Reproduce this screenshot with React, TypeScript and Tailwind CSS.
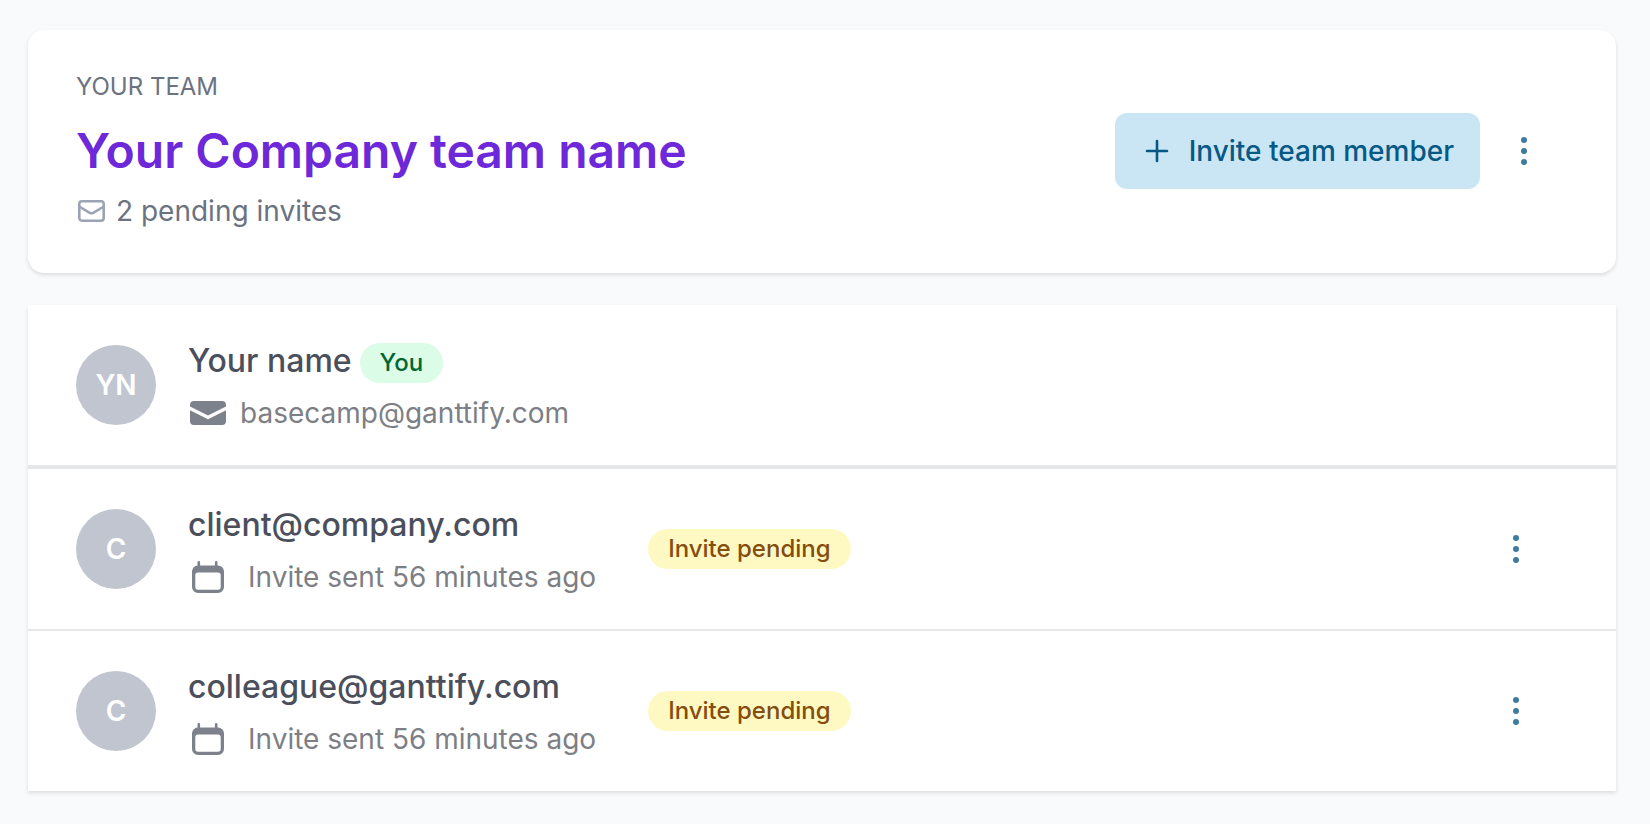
type Member = {
  id: number;
  initials: string;
  name: string;
  detail: string;
  isYou?: boolean;
  pending?: boolean;
};

const members: Member[] = [
  {
    id: 1,
    initials: "YN",
    name: "Your name",
    detail: "basecamp@ganttify.com",
    isYou: true,
  },
  {
    id: 2,
    initials: "C",
    name: "client@company.com",
    detail: "Invite sent 56 minutes ago",
    pending: true,
  },
  {
    id: 3,
    initials: "C",
    name: "colleague@ganttify.com",
    detail: "Invite sent 56 minutes ago",
    pending: true,
  },
];

function MailOutline() {
  return (
    <svg
      className="w-8 h-8 text-[#9ca3b5]"
      viewBox="0 0 32 32"
      fill="none"
      stroke="currentColor"
      strokeWidth="2.6"
      strokeLinecap="round"
      strokeLinejoin="round"
      aria-hidden="true"
    >
      <rect x="3.3" y="6.3" width="24.4" height="19.4" rx="2.6" />
      <path d="M4 12 L13.8 17.800 Q15.500 18.700 17.200 17.800 L27 12" />
    </svg>
  );
}

function MailSolid() {
  return (
    <svg
      className="w-10 h-10 text-[#7d818c]"
      viewBox="0 0 40 40"
      fill="currentColor"
      aria-hidden="true"
    >
      <path d="M2 13.600 V12 A4 4 0 0 1 6 8 H34 A4 4 0 0 1 38 12 V13.600 L20 22.600 Z" />
      <path d="M2 17.200 L20 26.200 L38 17.200 V28 A4 4 0 0 1 34 32 H6 A4 4 0 0 1 2 28 Z" />
    </svg>
  );
}

function Calendar() {
  return (
    <svg
      className="w-10 h-10 text-[#7d818c]"
      viewBox="0 0 40 40"
      fill="currentColor"
      aria-hidden="true"
    >
      <path
        fillRule="evenodd"
        d="M9.500 5.300 a1.300 1.300 0 0 1 2.600 0 V8.500 H26.900 V5.300 a1.300 1.300 0 0 1 2.600 0 V8.500 H30 A6 6 0 0 1 36 14.500 V30 A6 6 0 0 1 30 36 H10 A6 6 0 0 1 4 30 V14.500 A6 6 0 0 1 9.500 8.500 Z M10 15.500 A2.700 2.700 0 0 0 7.300 18.200 V30 A2.700 2.700 0 0 0 10 32.700 H30 A2.700 2.700 0 0 0 32.700 30 V18.200 A2.700 2.700 0 0 0 30 15.500 Z"
      />
    </svg>
  );
}

function MenuButton({ label }: { label: string }) {
  return (
    <button
      type="button"
      aria-label={label}
      className="flex w-10 h-10 items-center justify-center text-[#3f7ba0] cursor-pointer"
    >
      <svg
        className="w-10 h-10"
        viewBox="0 0 40 40"
        fill="currentColor"
        aria-hidden="true"
      >
        <circle cx="20" cy="9" r="3" />
        <circle cx="20" cy="20" r="3" />
        <circle cx="20" cy="31" r="3" />
      </svg>
    </button>
  );
}

function MemberRow({ member }: { member: Member }) {
  return (
    <li
      className={`box-content border-[#e5e6e8] last:border-b-0 ${
        member.isYou ? "border-b-4" : "border-b-2"
      }`}
    >
      <div className="flex items-center h-40 pl-12 pr-20">
        <div className="flex flex-1 items-center gap-8">
          <span className="flex shrink-0 w-20 h-20 items-center justify-center rounded-full bg-[#c1c5d0] text-[28px] font-semibold text-white">
            {member.initials}
          </span>
          <div className="grid gap-2">
            <div className="flex items-center gap-2">
              <h2 className="text-[32px] leading-12 font-medium text-[#4b4f5c]">
                {member.name}
              </h2>
              {member.isYou && (
                <span className="mt-1 rounded-full bg-green-100 px-5 text-2xl leading-10 font-medium text-green-800">
                  You
                </span>
              )}
            </div>
            <div
              className={`flex items-center ${
                member.pending ? "gap-5" : "gap-3"
              }`}
            >
              {member.pending ? <Calendar /> : <MailSolid />}
              <p className="text-[28px] leading-10 text-[#7d7f85]">
                {member.detail}
              </p>
            </div>
          </div>
          {member.pending && (
            <span className="ml-5 rounded-full bg-[#fef9c3] px-5 text-2xl leading-10 font-medium text-[#854d0e]">
              Invite pending
            </span>
          )}
        </div>
        {member.pending && <MenuButton label={`Options for ${member.name}`} />}
      </div>
    </li>
  );
}

export default function App() {
  return (
    <main className="min-h-screen grid content-start gap-8 bg-[#f9fafc] pt-[30px] pb-8 pl-7 pr-[34px] font-['Inter',sans-serif]">
      <header className="flex items-center justify-between rounded-2xl bg-white px-12 pt-[37px] pb-[42px] shadow-[0_2px_4px_rgba(0,0,0,0.12)]">
        <div>
          <p className="text-2xl leading-10 text-[#6b7280] uppercase">
            Your team
          </p>
          <h1 className="pt-3 pb-2 text-5xl leading-16 font-semibold text-[#6d28d9]">
            Your Company team name
          </h1>
          <p className="flex items-center gap-2 text-[28px] leading-10 text-[#6b7280]">
            <MailOutline />2 pending invites
          </p>
        </div>
        <div className="flex items-center gap-6 pt-1 pr-6">
          <button
            type="button"
            className="flex h-[76px] items-center gap-3.5 rounded-xl bg-[#cae6f4] pl-6 pr-[26px] text-[28px] font-medium text-[#075985] cursor-pointer"
          >
            <svg
              className="w-9 h-9"
              viewBox="0 0 36 36"
              stroke="currentColor"
              strokeWidth="2.6"
              strokeLinecap="round"
              aria-hidden="true"
            >
              <path d="M18 8 V28 M8 18 H28" />
            </svg>
            Invite team member
          </button>
          <MenuButton label="Team options" />
        </div>
      </header>
      <ul className="bg-white shadow-[0_2px_4px_rgba(0,0,0,0.12)]">
        {members.map((member) => (
          <MemberRow key={member.id} member={member} />
        ))}
      </ul>
    </main>
  );
}
